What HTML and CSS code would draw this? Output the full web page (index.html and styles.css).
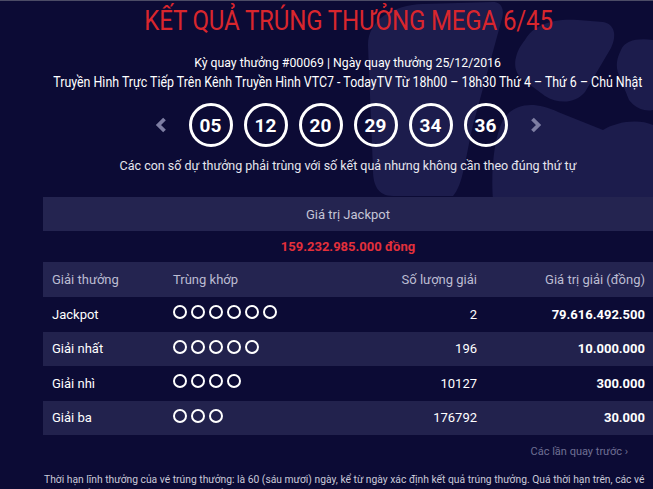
FILE: index.html
```html
<!DOCTYPE html>
<html lang="vi">
<head>
<meta charset="utf-8">
<link rel="stylesheet" href="styles.css">
</head>
<body>
<div class="page">
  <svg class="watermark" viewBox="0 0 300 200" width="300" height="200" aria-hidden="true">
    <path d="M15 45 C15 20 40 5 70 4 L140 2 C150 2 152 12 148 22 L120 125 C112 160 110 185 100 196 L40 196 C25 196 20 185 20 170 Z" fill="#1c1c4c"/>
    <path d="M172 40 C180 25 200 18 225 20 L250 22 C262 24 264 36 258 48 L232 92 C222 104 205 104 192 96 L168 78 C158 68 162 52 172 40 Z" fill="#1c1c4c"/>
    <path d="M268 50 C272 40 285 38 300 40 L300 110 C292 112 282 108 276 100 L266 75 C262 66 264 58 268 50 Z" fill="#1c1c4c"/>
    <path d="M150 120 C160 104 180 100 205 112 L250 130 C262 122 285 118 300 125 L300 200 L140 200 C138 175 140 140 150 120 Z" fill="#1c1c4c"/>
  </svg>
  <div class="content">
    <h1 class="title"><span>KẾT QUẢ TRÚNG THƯỞNG MEGA 6/45</span></h1>
    <p class="meta"><span class="m2">Kỳ quay thưởng #00069 | Ngày quay thưởng 25/12/2016</span></p>
    <p class="meta"><span class="m3">Truyền Hình Trực Tiếp Trên Kênh Truyền Hình VTC7 - TodayTV Từ 18h00 – 18h30 Thứ 4 – Thứ 6 – Chủ Nhật</span></p>
    <div class="balls">
      <svg class="chev" viewBox="0 0 12 16" width="12" height="16"><polyline points="9.5,2 3.5,8 9.5,14" fill="none" stroke="#7d7da2" stroke-width="3.8"/></svg>
      <div class="ball-list">
        <span class="ball">05</span>
        <span class="ball">12</span>
        <span class="ball">20</span>
        <span class="ball">29</span>
        <span class="ball">34</span>
        <span class="ball">36</span>
      </div>
      <svg class="chev" viewBox="0 0 12 16" width="12" height="16"><polyline points="2.5,2 8.5,8 2.5,14" fill="none" stroke="#7d7da2" stroke-width="3.8"/></svg>
    </div>
    <p class="note">Các con số dự thưởng phải trùng với số kết quả nhưng không cần theo đúng thứ tự</p>

    <div class="table">
      <div class="jp-head">Giá trị Jackpot</div>
      <div class="jp-value">159.232.985.000 đồng</div>
      <div class="row head">
        <span>Giải thưởng</span>
        <span>Trùng khớp</span>
        <span class="r">Số lượng giải</span>
        <span class="r">Giá trị giải (đồng)</span>
      </div>
      <div class="row">
        <span>Jackpot</span>
        <span class="dots"><i></i><i></i><i></i><i></i><i></i><i></i></span>
        <span class="r">2</span>
        <span class="r b">79.616.492.500</span>
      </div>
      <div class="row alt">
        <span>Giải nhất</span>
        <span class="dots"><i></i><i></i><i></i><i></i><i></i></span>
        <span class="r">196</span>
        <span class="r b">10.000.000</span>
      </div>
      <div class="row">
        <span>Giải nhì</span>
        <span class="dots"><i></i><i></i><i></i><i></i></span>
        <span class="r">10127</span>
        <span class="r b">300.000</span>
      </div>
      <div class="row alt">
        <span>Giải ba</span>
        <span class="dots"><i></i><i></i><i></i></span>
        <span class="r">176792</span>
        <span class="r b">30.000</span>
      </div>
    </div>
    <div class="prev">Các lần quay trước ›</div>
    <p class="footer">Thời hạn lĩnh thưởng của vé trúng thưởng: là 60 (sáu mươi) ngày, kể từ ngày xác định kết quả trúng thưởng. Quá thời hạn trên, các vé trúng thưởng không còn giá trị lĩnh thưởng.</p>
  </div>
</div>
</body>
</html>
```

FILE: styles.css
```css
* { box-sizing: border-box; }
html, body {
  margin: 0;
  padding: 0;
  background: #0c0b35;
  overflow: hidden;
}
body {
  font-family: Roboto, "Noto Sans", sans-serif;
  color: #ffffff;
  border-top: 1px solid #4c4c66;
}
.page {
  position: relative;
  width: 653px;
  height: 489px;
  overflow: hidden;
}
.watermark {
  position: absolute;
  top: -1px;
  left: 353px;
  z-index: 0;
}
.content {
  position: relative;
  z-index: 1;
  padding-left: 43px;
  width: 653px;
}
.title {
  margin: 0;
  height: 51px;
  padding-top: 4px;
  display: flex;
  justify-content: center;
  font-size: 28px;
  font-weight: 400;
  line-height: 32px;
  color: #d9262d;
  white-space: nowrap;
}
.title span {
  display: block;
  flex: none;
  transform: scaleX(0.86);
  letter-spacing: -0.2px;
}
.meta {
  margin: 0;
  display: flex;
  justify-content: center;
  height: 20px;
  line-height: 20px;
  white-space: nowrap;
}
.meta span {
  display: block;
  flex: none;
}
.m2 {
  font-size: 13.5px;
  transform: scaleX(0.91);
}
.m3 {
  font-size: 14px;
  transform: scaleX(0.885);
}
.balls {
  margin-top: 11px;
  height: 44px;
  display: flex;
  align-items: center;
  justify-content: center;
  gap: 22px;
}
.chev { display: block; }
.ball-list {
  display: flex;
  gap: 11px;
}
.ball {
  width: 44px;
  height: 44px;
  border: 3px solid #ffffff;
  border-radius: 50%;
  display: flex;
  align-items: center;
  justify-content: center;
  font-size: 19px;
  font-weight: 700;
}
.note {
  margin: 10px 0 0;
  text-align: center;
  font-size: 12.5px;
  line-height: 18px;
  color: #e6e6ee;
}
.table {
  margin-top: 22px;
  font-size: 13px;
}
.jp-head {
  height: 34px;
  background: #242450;
  display: flex;
  align-items: center;
  justify-content: center;
  color: #c4c4d6;
}
.jp-value {
  height: 31px;
  display: flex;
  align-items: center;
  justify-content: center;
  color: #e3303b;
  font-weight: 700;
}
.row {
  height: 34.5px;
  display: grid;
  grid-template-columns: 121px 154px 150px 168px;
  align-items: center;
  padding: 0 8px 0 9px;
}
.row.head {
  height: 35px;
  background: #242450;
  color: #bcbcd2;
}
.row.alt { background: #22224d; }
.r { text-align: right; }
.b { font-weight: 700; }
.dots {
  display: flex;
  gap: 4px;
  margin-top: -4px;
}
.dots i {
  display: block;
  width: 14px;
  height: 14px;
  border: 2px solid #ffffff;
  border-radius: 50%;
}
.prev {
  margin-top: 10px;
  padding-right: 25px;
  text-align: right;
  font-size: 11px;
  color: #6f6f93;
  line-height: 14px;
}
.footer {
  margin: 14px 0 0;
  padding-left: 1px;
  padding-right: 2px;
  font-size: 10.3px;
  line-height: 14px;
  color: #c9c9d8;
}
```
